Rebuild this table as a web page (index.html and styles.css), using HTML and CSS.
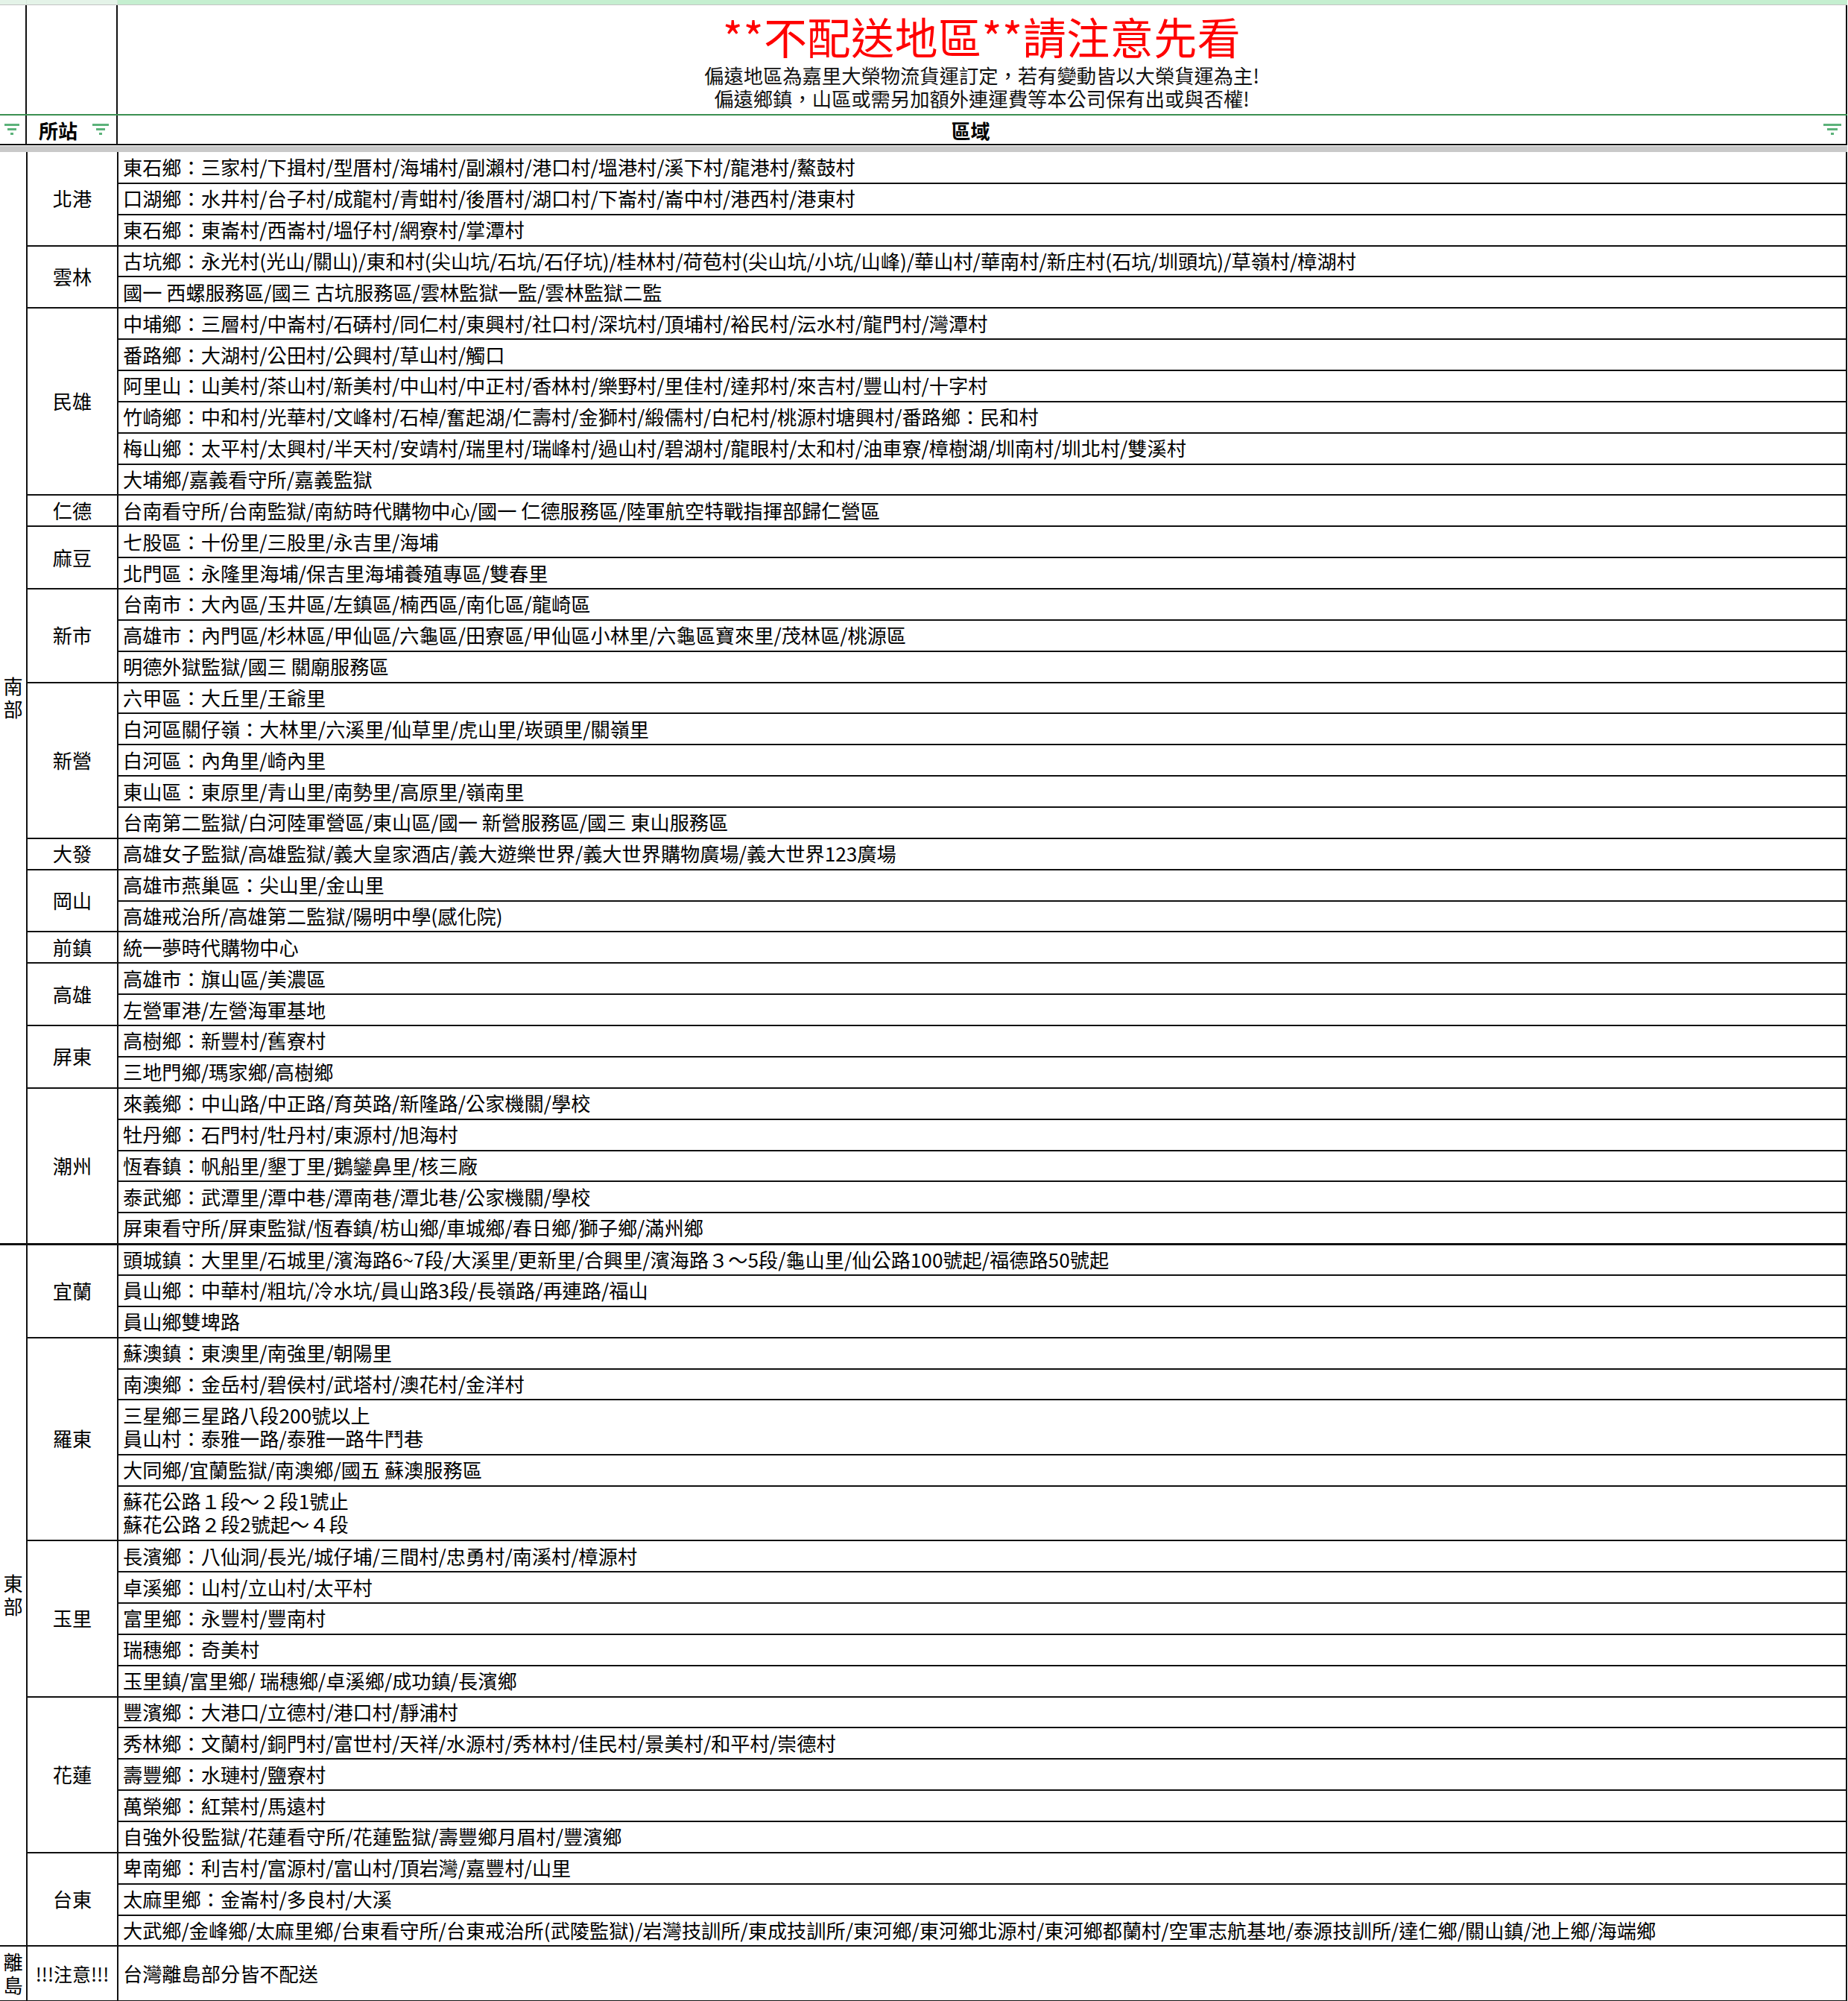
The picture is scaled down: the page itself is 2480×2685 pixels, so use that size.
FILE: index.html
```html
<!DOCTYPE html>
<html lang="zh-Hant">
<head>
<meta charset="utf-8">
<title>不配送地區</title>
<link rel="stylesheet" href="styles.css">
</head>
<body>
<div class="sheet">
  <div class="topbar">
    <div class="tb-cell tb-light"></div>
    <div class="tb-cell tb-light"></div>
    <div class="tb-cell tb-green"></div>
  </div>
  <div class="title-row">
    <div class="tr-cell"></div>
    <div class="tr-cell"></div>
    <div class="tr-cell title-cell">
      <div class="title">**不配送地區**請注意先看</div>
      <div class="subtitle">偏遠地區為嘉里大榮物流貨運訂定，若有變動皆以大榮貨運為主!<br>偏遠鄉鎮，山區或需另加額外連運費等本公司保有出或與否權!</div>
    </div>
  </div>
  <div class="head-row">
    <div class="hd-cell hd-region">
      <svg class="filter" width="20" height="16" viewBox="0 0 20 16"><rect x="0" y="0" width="20" height="3"/><rect x="4" y="6" width="12" height="3"/><rect x="8" y="12" width="4" height="3"/></svg>
    </div>
    <div class="hd-cell hd-station">
      <span class="hd-label">所站</span>
      <svg class="filter" width="22" height="16" viewBox="0 0 22 16"><rect x="0" y="0" width="22" height="3"/><rect x="5" y="6" width="12" height="3"/><rect x="9" y="12" width="4" height="3"/></svg>
    </div>
    <div class="hd-cell hd-area">
      <span class="hd-label">區域</span>
      <svg class="filter" width="24" height="16" viewBox="0 0 24 16"><rect x="0" y="0" width="24" height="3"/><rect x="5" y="6" width="14" height="3"/><rect x="10" y="12" width="4" height="3"/></svg>
    </div>
  </div>
  <div class="freeze"></div>

  <table class="data">
    <colgroup><col class="c-region"><col class="c-station"><col class="c-area"></colgroup>
    <tbody>
      <tr><td class="region" rowspan="35">南部</td><td class="station" rowspan="3">北港</td><td class="area">東石鄉：三家村/下揖村/型厝村/海埔村/副瀨村/港口村/塭港村/溪下村/龍港村/鰲鼓村</td></tr>
      <tr><td class="area">口湖鄉：水井村/台子村/成龍村/青蚶村/後厝村/湖口村/下崙村/崙中村/港西村/港東村</td></tr>
      <tr><td class="area">東石鄉：東崙村/西崙村/塭仔村/網寮村/掌潭村</td></tr>

      <tr><td class="station" rowspan="2">雲林</td><td class="area">古坑鄉：永光村(光山/關山)/東和村(尖山坑/石坑/石仔坑)/桂林村/荷苞村(尖山坑/小坑/山峰)/華山村/華南村/新庄村(石坑/圳頭坑)/草嶺村/樟湖村</td></tr>
      <tr><td class="area">國一 西螺服務區/國三 古坑服務區/雲林監獄一監/雲林監獄二監</td></tr>

      <tr><td class="station" rowspan="6">民雄</td><td class="area">中埔鄉：三層村/中崙村/石硦村/同仁村/東興村/社口村/深坑村/頂埔村/裕民村/沄水村/龍門村/灣潭村</td></tr>
      <tr><td class="area">番路鄉：大湖村/公田村/公興村/草山村/觸口</td></tr>
      <tr><td class="area">阿里山：山美村/茶山村/新美村/中山村/中正村/香林村/樂野村/里佳村/達邦村/來吉村/豐山村/十字村</td></tr>
      <tr><td class="area">竹崎鄉：中和村/光華村/文峰村/石棹/奮起湖/仁壽村/金獅村/緞儒村/白杞村/桃源村塘興村/番路鄉：民和村</td></tr>
      <tr><td class="area">梅山鄉：太平村/太興村/半天村/安靖村/瑞里村/瑞峰村/過山村/碧湖村/龍眼村/太和村/油車寮/樟樹湖/圳南村/圳北村/雙溪村</td></tr>
      <tr><td class="area">大埔鄉/嘉義看守所/嘉義監獄</td></tr>

      <tr><td class="station">仁德</td><td class="area">台南看守所/台南監獄/南紡時代購物中心/國一 仁德服務區/陸軍航空特戰指揮部歸仁營區</td></tr>

      <tr><td class="station" rowspan="2">麻豆</td><td class="area">七股區：十份里/三股里/永吉里/海埔</td></tr>
      <tr><td class="area">北門區：永隆里海埔/保吉里海埔養殖專區/雙春里</td></tr>

      <tr><td class="station" rowspan="3">新市</td><td class="area">台南市：大內區/玉井區/左鎮區/楠西區/南化區/龍崎區</td></tr>
      <tr><td class="area">高雄市：內門區/杉林區/甲仙區/六龜區/田寮區/甲仙區小林里/六龜區寶來里/茂林區/桃源區</td></tr>
      <tr><td class="area">明德外獄監獄/國三 關廟服務區</td></tr>

      <tr><td class="station" rowspan="5">新營</td><td class="area">六甲區：大丘里/王爺里</td></tr>
      <tr><td class="area">白河區關仔嶺：大林里/六溪里/仙草里/虎山里/崁頭里/關嶺里</td></tr>
      <tr><td class="area">白河區：內角里/崎內里</td></tr>
      <tr><td class="area">東山區：東原里/青山里/南勢里/高原里/嶺南里</td></tr>
      <tr><td class="area">台南第二監獄/白河陸軍營區/東山區/國一 新營服務區/國三 東山服務區</td></tr>

      <tr><td class="station">大發</td><td class="area">高雄女子監獄/高雄監獄/義大皇家酒店/義大遊樂世界/義大世界購物廣場/義大世界123廣場</td></tr>

      <tr><td class="station" rowspan="2">岡山</td><td class="area">高雄市燕巢區：尖山里/金山里</td></tr>
      <tr><td class="area">高雄戒治所/高雄第二監獄/陽明中學(感化院)</td></tr>

      <tr><td class="station">前鎮</td><td class="area">統一夢時代購物中心</td></tr>

      <tr><td class="station" rowspan="2">高雄</td><td class="area">高雄市：旗山區/美濃區</td></tr>
      <tr><td class="area">左營軍港/左營海軍基地</td></tr>

      <tr><td class="station" rowspan="2">屏東</td><td class="area">高樹鄉：新豐村/舊寮村</td></tr>
      <tr><td class="area">三地門鄉/瑪家鄉/高樹鄉</td></tr>

      <tr><td class="station" rowspan="5">潮州</td><td class="area">來義鄉：中山路/中正路/育英路/新隆路/公家機關/學校</td></tr>
      <tr><td class="area">牡丹鄉：石門村/牡丹村/東源村/旭海村</td></tr>
      <tr><td class="area">恆春鎮：帆船里/墾丁里/鵝鑾鼻里/核三廠</td></tr>
      <tr><td class="area">泰武鄉：武潭里/潭中巷/潭南巷/潭北巷/公家機關/學校</td></tr>
      <tr class="region-end"><td class="area">屏東看守所/屏東監獄/恆春鎮/枋山鄉/車城鄉/春日鄉/獅子鄉/滿州鄉</td></tr>

      <tr class="region-start"><td class="region" rowspan="21">東部</td><td class="station" rowspan="3">宜蘭</td><td class="area">頭城鎮：大里里/石城里/濱海路6~7段/大溪里/更新里/合興里/濱海路３～5段/龜山里/仙公路100號起/福德路50號起</td></tr>
      <tr><td class="area">員山鄉：中華村/粗坑/冷水坑/員山路3段/長嶺路/再連路/福山</td></tr>
      <tr><td class="area">員山鄉雙埤路</td></tr>

      <tr><td class="station" rowspan="5">羅東</td><td class="area">蘇澳鎮：東澳里/南強里/朝陽里</td></tr>
      <tr><td class="area">南澳鄉：金岳村/碧侯村/武塔村/澳花村/金洋村</td></tr>
      <tr class="double"><td class="area">三星鄉三星路八段200號以上<br>員山村：泰雅一路/泰雅一路牛鬥巷</td></tr>
      <tr><td class="area">大同鄉/宜蘭監獄/南澳鄉/國五 蘇澳服務區</td></tr>
      <tr class="double"><td class="area">蘇花公路１段～２段1號止<br>蘇花公路２段2號起～４段</td></tr>

      <tr><td class="station" rowspan="5">玉里</td><td class="area">長濱鄉：八仙洞/長光/城仔埔/三間村/忠勇村/南溪村/樟源村</td></tr>
      <tr><td class="area">卓溪鄉：山村/立山村/太平村</td></tr>
      <tr><td class="area">富里鄉：永豐村/豐南村</td></tr>
      <tr><td class="area">瑞穗鄉：奇美村</td></tr>
      <tr><td class="area">玉里鎮/富里鄉/ 瑞穗鄉/卓溪鄉/成功鎮/長濱鄉</td></tr>

      <tr><td class="station" rowspan="5">花蓮</td><td class="area">豐濱鄉：大港口/立德村/港口村/靜浦村</td></tr>
      <tr><td class="area">秀林鄉：文蘭村/銅門村/富世村/天祥/水源村/秀林村/佳民村/景美村/和平村/崇德村</td></tr>
      <tr><td class="area">壽豐鄉：水璉村/鹽寮村</td></tr>
      <tr><td class="area">萬榮鄉：紅葉村/馬遠村</td></tr>
      <tr><td class="area">自強外役監獄/花蓮看守所/花蓮監獄/壽豐鄉月眉村/豐濱鄉</td></tr>

      <tr><td class="station" rowspan="3">台東</td><td class="area">卑南鄉：利吉村/富源村/富山村/頂岩灣/嘉豐村/山里</td></tr>
      <tr><td class="area">太麻里鄉：金崙村/多良村/大溪</td></tr>
      <tr><td class="area">大武鄉/金峰鄉/太麻里鄉/台東看守所/台東戒治所(武陵監獄)/岩灣技訓所/東成技訓所/東河鄉/東河鄉北源村/東河鄉都蘭村/空軍志航基地/泰源技訓所/達仁鄉/關山鎮/池上鄉/海端鄉</td></tr>

      <tr class="islands"><td class="region">離島</td><td class="station">!!!注意!!!</td><td class="area">台灣離島部分皆不配送</td></tr>
    </tbody>
  </table>
</div>
</body>
</html>
```

FILE: styles.css
```css
html, body {
  margin: 0;
  padding: 0;
  background: #ffffff;
}

body {
  font-family: "Noto Sans CJK TC", "Liberation Sans", sans-serif;
  color: #000;
  width: 2480px;
  overflow: hidden;
}

.sheet {
  width: 2479px;
}

/* top green strip */
.topbar {
  display: grid;
  grid-template-columns: 36px 122px 1fr;
  height: 6px;
  border-bottom: 1px solid #c3c3c3;
}
.tb-cell {
  border-right: 1px solid #d8e8dc;
}
.tb-light {
  background: #e4f3e8;
}
.tb-green {
  background: #c5efd0;
  border-right: none;
}

/* title row */
.title-row {
  display: grid;
  grid-template-columns: 36px 122px 1fr;
  height: 146px;
}
.tr-cell {
  border-right: 2px solid #111;
}
.title-cell {
  text-align: center;
  padding-top: 9px;
}
.title {
  color: #ff0000;
  font-size: 58px;
  line-height: 64px;
  letter-spacing: 0.5px;
}
.subtitle {
  margin-top: 5px;
  font-size: 26.3px;
  line-height: 31px;
  color: #111;
}

/* header row with filter buttons */
.head-row {
  display: grid;
  grid-template-columns: 36px 122px 1fr;
  height: 38px;
  border-top: 2px solid #3b8f52;
  border-bottom: 2px solid #111;
}
.hd-cell {
  display: flex;
  align-items: center;
  border-right: 2px solid #111;
}
.hd-region {
  justify-content: center;
  padding-right: 2px;
}
.hd-station {
  padding-left: 16px;
  gap: 20px;
}
.hd-area {
  padding-right: 6px;
}
.hd-area .hd-label {
  flex: 1;
  text-align: center;
}
.hd-label {
  font-weight: 700;
  font-size: 26px;
  line-height: 31px;
}
.filter {
  fill: #5cb27a;
  display: block;
}

.freeze {
  margin-top: 1px;
  height: 8px;
  background: #c9c9c9;
}

/* data table */
.data {
  width: 2479px;
  border-collapse: collapse;
  table-layout: fixed;
  font-size: 26.2px;
  line-height: 31px;
}
.c-region { width: 36px; }
.c-station { width: 122px; }

.data td {
  border: 2px solid #111;
  height: 41.86px;
  padding: 0;
  vertical-align: middle;
  box-sizing: border-box;
}
.data tr:first-child td {
  border-top: none;
}
.data td.region {
  border-left: none;
  text-align: center;
  white-space: normal;
  word-break: break-all;
}
.data td.station {
  text-align: center;
  white-space: nowrap;
}
.data td.area {
  padding-left: 6px;
  white-space: nowrap;
}
.data tr.double td.area {
  height: 73.5px;
}
.data tr.region-start td {
  border-top: 3px solid #111;
}
.data tr.islands td {
  height: 74px;
}
.data tr.islands td.station {
  font-size: 25px;
}
```
